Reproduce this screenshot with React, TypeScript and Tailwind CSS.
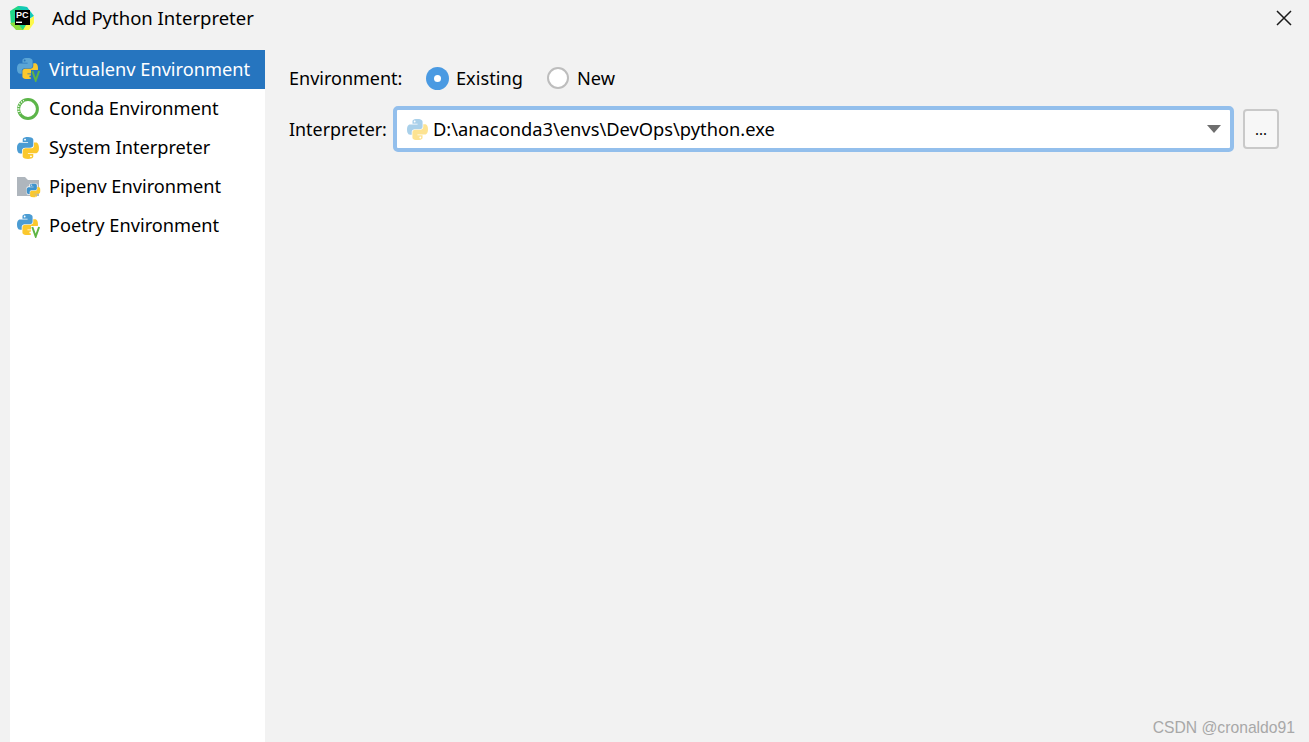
const font = "font-['Noto_Sans','Open_Sans',sans-serif]"

const snake =
  'M54.9 0C26.8 0 28.6 12.2 28.6 12.2l0 12.6h26.8v3.8H17.9S0 26.6 0 54.9s15.6 27.3 15.6 27.3h9.3V69s-.5-15.6 15.4-15.6h26.4s14.9.2 14.9-14.4V14.8S83.9 0 54.9 0zM40.2 8.5a4.8 4.8 0 110 9.6 4.8 4.8 0 010-9.6z'

function PythonIcon({ size = 22, faded = false }: { size?: number; faded?: boolean }) {
  return (
    <svg width={size} height={size} viewBox="0 0 110 110" className="block shrink-0">
      <path fill={faded ? '#a9d0ea' : '#4b9cd3'} fillRule="evenodd" d={snake} />
      <g transform="rotate(180 55 55)">
        <path fill={faded ? '#fde391' : '#fbc82d'} fillRule="evenodd" d={snake} />
      </g>
    </svg>
  )
}

function VenvIcon({ selected = false }: { selected?: boolean }) {
  return (
    <svg width="24" height="24" viewBox="0 0 24 24" className="block">
      <svg x="0" y="0" width="21" height="21" viewBox="0 0 110 110">
        <path fill={selected ? '#5aa5d6' : '#4b9cd3'} fillRule="evenodd" d={snake} />
        <g transform="rotate(180 55 55)">
          <path fill="#fbc82d" fillRule="evenodd" d={snake} />
        </g>
      </svg>
      <path d="M14 12h10v12H14z" fill={selected ? '#2675bf' : '#ffffff'} />
      <path d="M15.3 13l3.4 9.5 3.4-9.5" fill="none" stroke="#5fb544" strokeWidth="2" />
    </svg>
  )
}

function CondaIcon() {
  return (
    <svg width="24" height="24" viewBox="0 0 24 24" className="block">
      <circle cx="11" cy="12" r="9.4" fill="none" stroke="#5cb549" strokeWidth="3" />
      <path d="M1.6 15a9.4 9.4 0 0 1 5.4 -11.5" fill="none" stroke="#ffffff" strokeWidth="1.6" strokeDasharray="1.2 1.4" />
      <path d="M3.4 17a9.4 9.4 0 0 1 -1 -7" fill="none" stroke="#d5eecf" strokeWidth="1.2" strokeDasharray="1 1.4" />
    </svg>
  )
}

function PipenvIcon() {
  return (
    <svg width="24" height="24" viewBox="0 0 24 24" className="block">
      <path d="M0 2h8l3 3h11v16H0z" fill="#afb6bd" />
      <svg x="9.5" y="8.5" width="14" height="14" viewBox="0 0 110 110">
        <path fill="#3f93cc" stroke="#f4f4f4" strokeWidth="14" paintOrder="stroke" fillRule="evenodd" d={snake} />
        <g transform="rotate(180 55 55)">
          <path fill="#fbc82d" fillRule="evenodd" d={snake} />
        </g>
      </svg>
    </svg>
  )
}

function PyCharmLogo() {
  return (
    <svg width="26" height="26" viewBox="0 0 26 26" className="block">
      <path d="M1 6l8-5 9 1 2 6 2 10-4 7-9 0-7-5z" fill="#21d789" />
      <path d="M9 1l9 1 7 9-5 3z" fill="#13c9b8" />
      <path d="M25 11l0 7-5 7-6 0 6-10z" fill="#fcf84a" />
      <path d="M1 18l6 7 7 0-6-8z" fill="#8fe03c" />
      <rect x="6" y="5" width="15" height="15" fill="#000000" />
      <text x="7" y="13" fill="#ffffff" fontSize="9" fontWeight="700" fontFamily="Liberation Sans, sans-serif">PC</text>
      <rect x="7" y="16.6" width="6" height="1.4" fill="#ffffff" />
    </svg>
  )
}

const items = [
  { label: 'Virtualenv Environment', icon: <VenvIcon selected />, selected: true },
  { label: 'Conda Environment', icon: <CondaIcon /> },
  { label: 'System Interpreter', icon: <PythonIcon /> },
  { label: 'Pipenv Environment', icon: <PipenvIcon /> },
  { label: 'Poetry Environment', icon: <VenvIcon /> },
]

export default function App() {
  return (
    <div className={`relative flex h-[742px] w-[1309px] flex-col overflow-hidden bg-[#f2f2f2] text-[18.2px] text-black ${font}`}>
      <div className="flex h-[50px] shrink-0 items-start pl-[9px] pr-[15px] pt-[5px]">
        <PyCharmLogo />
        <div className="ml-[17px] text-[18.5px] leading-[26px]">Add Python Interpreter</div>
        <button className="ml-auto mt-[3px] block">
          <svg width="20" height="20" viewBox="0 0 20 20" className="block">
            <path d="M3 3l14 14M17 3L3 17" stroke="#1a1a1a" strokeWidth="1.5" fill="none" />
          </svg>
        </button>
      </div>
      <div className="flex min-h-0 flex-1 pl-[10px]">
        <div className="w-[255px] shrink-0 bg-white">
          {items.map((item) => (
            <div
              key={item.label}
              className={`flex h-[39px] items-center pl-[7px] ${item.selected ? 'bg-[#2675bf] text-white' : ''}`}
            >
              <div className="w-[32px]">{item.icon}</div>
              <span>{item.label}</span>
            </div>
          ))}
        </div>
        <div className="flex-1 pl-[24px] pr-[30px] pt-[8px]">
          <div className="flex h-[40px] items-center">
            <span className="w-[137px] text-[18px]">Environment:</span>
            <span className="flex h-[23px] w-[23px] items-center justify-center rounded-full bg-[#4a9ae2]">
              <span className="h-[7px] w-[7px] rounded-full bg-white" />
            </span>
            <span className="ml-[7px] mt-[2px] w-[91px]">Existing</span>
            <span className="h-[22px] w-[22px] rounded-full border-2 border-[#bdbdbd] bg-white" />
            <span className="ml-[8px] mt-[2px]">New</span>
          </div>
          <div className="mt-[8px] flex h-[46px] items-center">
            <span className="w-[104px] text-[17.9px]">Interpreter:</span>
            <div className="flex h-[46px] w-[841px] items-center rounded-[5px] border-[4px] border-[#93bfec] bg-white pl-[10px] pr-[9px]">
              <PythonIcon size={21} faded />
              <span className="ml-[5px] text-[18.3px]">D:\anaconda3\envs\DevOps\python.exe</span>
              <svg width="14" height="8" viewBox="0 0 14 8" className="ml-auto block">
                <path d="M0 0h14L7 8z" fill="#6e6e6e" />
              </svg>
            </div>
            <button className="ml-[9px] flex h-[40px] w-[36px] items-center justify-center rounded-[4px] border-2 border-[#c9c9c9] bg-[#f7f7f7] text-[15px] leading-none">
              ...
            </button>
          </div>
        </div>
      </div>
      <div className="absolute bottom-[5px] right-[14px] font-['Liberation_Sans',sans-serif] text-[15.7px] leading-[18px] text-[#a8a8a8]">
        CSDN @cronaldo91
      </div>
    </div>
  )
}
